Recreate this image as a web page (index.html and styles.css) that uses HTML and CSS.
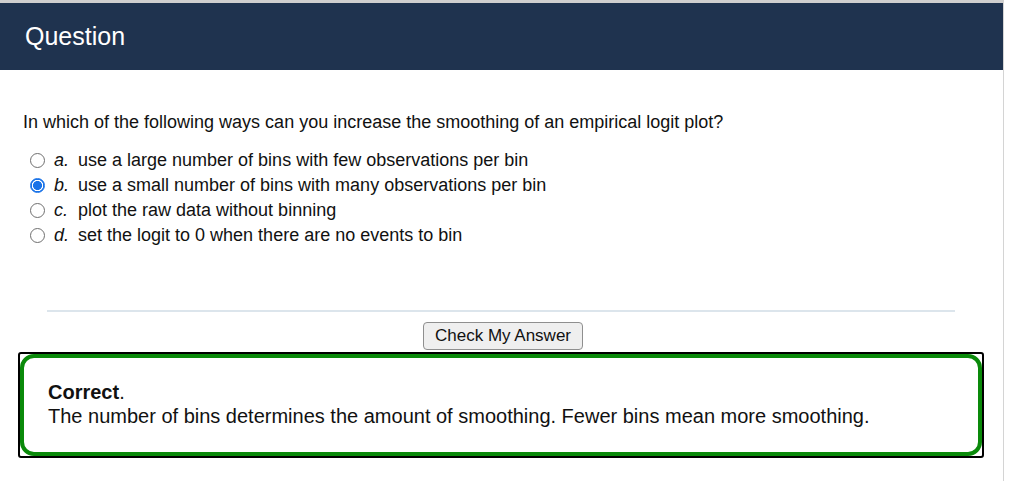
FILE: index.html
```html
<!DOCTYPE html>
<html>
<head>
<meta charset="utf-8">
<link rel="stylesheet" href="styles.css">
</head>
<body>
<div class="panel">
  <div class="header">Question</div>
  <div class="body">
    <p class="prompt">In which of the following ways can you increase the smoothing of an empirical logit plot?</p>
    <ul class="options">
      <li class="option"><input type="radio" name="q"><span class="letter">a.</span><span>use a large number of bins with few observations per bin</span></li>
      <li class="option"><input type="radio" name="q" checked><span class="letter">b.</span><span>use a small number of bins with many observations per bin</span></li>
      <li class="option"><input type="radio" name="q"><span class="letter">c.</span><span>plot the raw data without binning</span></li>
      <li class="option"><input type="radio" name="q"><span class="letter">d.</span><span>set the logit to 0 when there are no events to bin</span></li>
    </ul>
    <hr class="rule">
    <div class="actions"><button class="check">Check My Answer</button></div>
    <div class="feedback-outer">
      <div class="feedback">
        <div><b>Correct</b>.</div>
        <div>The number of bins determines the amount of smoothing. Fewer bins mean more smoothing.</div>
      </div>
    </div>
  </div>
</div>
</body>
</html>
```
FILE: styles.css
```css
html, body {
  margin: 0;
  padding: 0;
  background: #ffffff;
}
body {
  font-family: "Liberation Sans", Arial, sans-serif;
  color: #111;
}
.panel {
  width: 1004px;
  height: 481px;
  border-top: 3px solid #cfcfcf;
  border-right: 1px solid #d4d4d4;
  box-sizing: border-box;
}
.header {
  background: #1f334f;
  color: #ffffff;
  height: 67px;
  padding-left: 25px;
  font-size: 25px;
  line-height: 67px;
  box-sizing: border-box;
}
.body {
  padding: 0 0 0 18px;
}
.prompt {
  margin: 0;
  padding: 41px 0 0 5px;
  font-size: 18px;
  line-height: 22px;
}
.options {
  list-style: none;
  margin: 15px 0 0 0;
  padding: 0;
}
.option {
  display: flex;
  align-items: center;
  height: 25px;
  font-size: 18px;
}
.option input {
  appearance: none;
  -webkit-appearance: none;
  box-sizing: border-box;
  margin: 0 9px 0 12px;
  width: 15px;
  height: 15px;
  border: 1px solid #6f6f6f;
  border-radius: 50%;
  background: #fff;
}
.option input:checked {
  border: 1px solid #1a73e8;
  background: radial-gradient(circle, #1a73e8 0 4.2px, #ffffff 4.8px 5.4px, #1a73e8 6px);
}
.letter {
  font-style: italic;
  width: 24px;
}
.rule {
  border: 0;
  border-top: 2px solid #dce5ec;
  margin: 62px 0 0 29px;
  width: 908px;
}
.actions {
  display: flex;
  justify-content: center;
  padding: 10px 0 0 0;
  margin-left: -15px;
}
.check {
  font-family: "Liberation Sans", Arial, sans-serif;
  font-size: 17px;
  width: 160px;
  height: 28px;
  background: #efefef;
  border: 1px solid #8f8f8f;
  border-radius: 4px;
  color: #111;
  padding: 0;
}
.feedback-outer {
  width: 966px;
  height: 106px;
  box-sizing: border-box;
  border: 2px solid #000;
  border-radius: 3px;
  margin-top: 2px;
}
.feedback {
  height: 100%;
  box-sizing: border-box;
  border: 4px solid #0a8a0a;
  border-radius: 14px;
  padding: 22px 24px;
  font-size: 20px;
  line-height: 24px;
}
```
